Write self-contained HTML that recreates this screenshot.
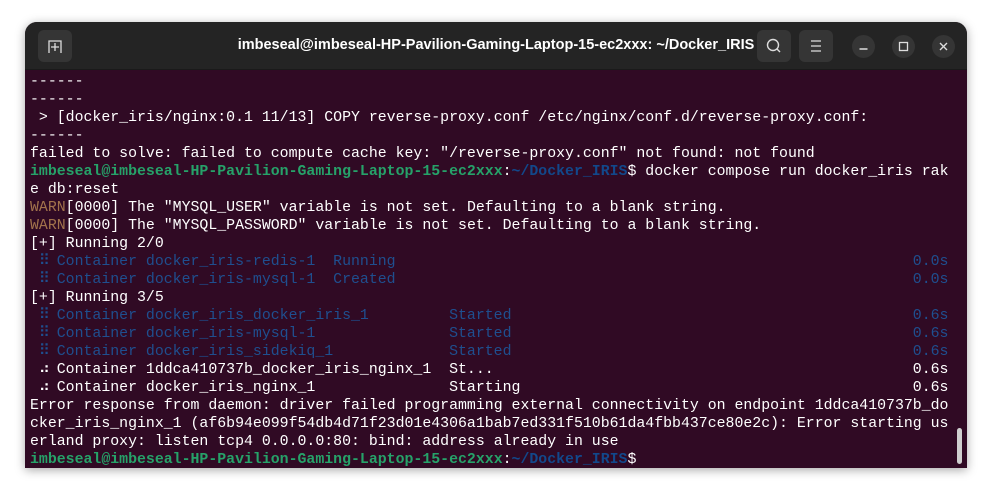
<!DOCTYPE html>
<html><head><style>
html,body{margin:0;padding:0;width:993px;height:497px;background:#fff;overflow:hidden}
.win{position:absolute;left:25px;top:22px;width:942px;height:446px;border-radius:12px 12px 0 0;overflow:hidden;box-shadow:0 2px 10px rgba(0,0,0,.35);background:#300a24}
.hdr{position:absolute;left:0;top:0;width:942px;height:47px;background:#242424;border-bottom:1px solid #1a1a1a}
.title{position:absolute;left:0;width:942px;top:0;height:47px;text-align:center;color:#fff;font:bold 14.5px "Liberation Sans",sans-serif;line-height:47px}
.btn{position:absolute;top:8px;width:34px;height:32px;border-radius:6px;background:#353535}
.cb{position:absolute;top:13px;width:23px;height:23px;border-radius:50%;background:#353535}
pre{position:absolute;left:5px;top:51px;margin:0;font:14.87px "Liberation Mono",monospace;line-height:18px;color:#fff;white-space:pre}
.g{color:#26a269;font-weight:bold}.b{color:#12488b;font-weight:bold}.d{color:#1f4f8f}.w{color:#a2734c}
.br{display:inline-block;width:1ch;text-align:center;overflow:hidden;vertical-align:top}
.c0{display:inline-block;width:99ch}.c1{display:inline-block;width:47ch}.c2{display:inline-block;width:52ch}
.sb{position:absolute;left:932px;top:406px;width:5px;height:36px;border-radius:3px;background:#cfcfcf}
</style></head><body>
<div class="win">
<div class="hdr">
<div class="btn" style="left:13px"><svg width="34" height="32"><path d="M11 23V11h12v12" fill="none" stroke="#ddd" stroke-width="1.3"/><path d="M17 13v8M13 17h8" stroke="#ddd" stroke-width="1.3"/></svg></div>
<div class="title">imbeseal@imbeseal-HP-Pavilion-Gaming-Laptop-15-ec2xxx: ~/Docker_IRIS</div>
<div class="btn" style="left:732px"><svg width="34" height="32"><circle cx="16" cy="15" r="5.5" fill="none" stroke="#ddd" stroke-width="1.4"/><path d="M20 19l3 3" stroke="#ddd" stroke-width="1.4"/></svg></div>
<div class="btn" style="left:774px"><svg width="34" height="32"><path d="M12 11h10M12 16h10M12 21h10" stroke="#ddd" stroke-width="1.3"/></svg></div>
<div class="cb" style="left:827px"><svg width="23" height="23"><path d="M7.5 14h8" stroke="#ddd" stroke-width="1.4"/></svg></div>
<div class="cb" style="left:867px"><svg width="23" height="23"><rect x="7.5" y="7.5" width="8" height="8" fill="none" stroke="#ddd" stroke-width="1.3"/></svg></div>
<div class="cb" style="left:907px"><svg width="23" height="23"><path d="M8 8l7 7M15 8l-7 7" stroke="#ddd" stroke-width="1.4"/></svg></div>
</div>
<pre>------
------
 &gt; [docker_iris/nginx:0.1 11/13] COPY reverse-proxy.conf /etc/nginx/conf.d/reverse-proxy.conf:
------
failed to solve: failed to compute cache key: "/reverse-proxy.conf" not found: not found
<span class="g">imbeseal@imbeseal-HP-Pavilion-Gaming-Laptop-15-ec2xxx</span>:<span class="b">~/Docker_IRIS</span>$ docker compose run docker_iris rak
e db:reset
<span class="w">WARN</span>[0000] The "MYSQL_USER" variable is not set. Defaulting to a blank string.
<span class="w">WARN</span>[0000] The "MYSQL_PASSWORD" variable is not set. Defaulting to a blank string.
[+] Running 2/0
<span class="d"><span class="c0"> <span class="br">⠿</span> Container docker_iris-redis-1  Running</span>0.0s</span>
<span class="d"><span class="c0"> <span class="br">⠿</span> Container docker_iris-mysql-1  Created</span>0.0s</span>
[+] Running 3/5
<span class="d"><span class="c1"> <span class="br">⠿</span> Container docker_iris_docker_iris_1</span><span class="c2">Started</span>0.6s</span>
<span class="d"><span class="c1"> <span class="br">⠿</span> Container docker_iris-mysql-1</span><span class="c2">Started</span>0.6s</span>
<span class="d"><span class="c1"> <span class="br">⠿</span> Container docker_iris_sidekiq_1</span><span class="c2">Started</span>0.6s</span>
<span class="c1"> <span class="br">⠴</span> Container 1ddca410737b_docker_iris_nginx_1</span><span class="c2">St...</span>0.6s
<span class="c1"> <span class="br">⠴</span> Container docker_iris_nginx_1</span><span class="c2">Starting</span>0.6s
Error response from daemon: driver failed programming external connectivity on endpoint 1ddca410737b_do
cker_iris_nginx_1 (af6b94e099f54db4d71f23d01e4306a1bab7ed331f510b61da4fbb437ce80e2c): Error starting us
erland proxy: listen tcp4 0.0.0.0:80: bind: address already in use
<span class="g">imbeseal@imbeseal-HP-Pavilion-Gaming-Laptop-15-ec2xxx</span>:<span class="b">~/Docker_IRIS</span>$</pre>
<div class="sb"></div>
</div>
</body></html>
